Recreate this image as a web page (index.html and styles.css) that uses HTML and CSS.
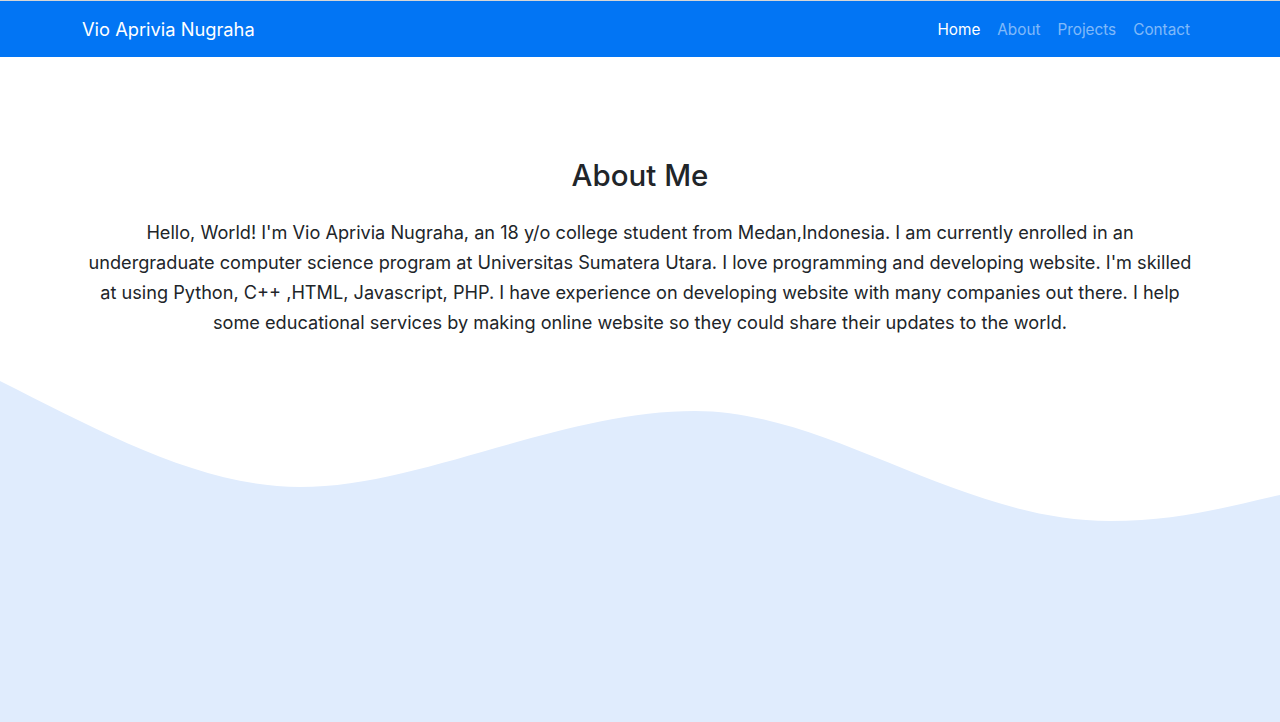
FILE: index.html
```html
<!DOCTYPE html>
<html lang="en">
<head>
<meta charset="utf-8">
<title>Vio Aprivia Nugraha</title>
<link rel="stylesheet" href="styles.css">
</head>
<body>
  <nav class="navbar">
    <div class="nav-inner">
      <a class="brand" href="#">Vio Aprivia Nugraha</a>
      <ul class="nav-links">
        <li><a class="nav-link active" href="#">Home</a></li>
        <li><a class="nav-link" href="#">About</a></li>
        <li><a class="nav-link" href="#">Projects</a></li>
        <li><a class="nav-link" href="#">Contact</a></li>
      </ul>
    </div>
  </nav>
  <main class="about">
    <h2 class="about-title">About Me</h2>
    <p class="about-text">Hello, World! I'm Vio Aprivia Nugraha, an 18 y/o college student from Medan,Indonesia. I am currently enrolled in an<br>undergraduate computer science program at Universitas Sumatera Utara. I love programming and developing website. I'm skilled<br>at using Python, C++ ,HTML, Javascript, PHP. I have experience on developing website with many companies out there. I help<br>some educational services by making online website so they could share their updates to the world.</p>
  </main>
  <svg class="wave" viewBox="0 0 1280 341" preserveAspectRatio="none" aria-hidden="true">
    <path d="M0,0 C100,50 200,106 300,106 C420,106 560,30 695,30 C830,30 960,140 1110,140 C1180,140 1230,125 1280,114 L1280,341 L0,341 Z" fill="#e0ecfd"/>
  </svg>
</body>
</html>
```

FILE: styles.css
```css
* { box-sizing: border-box; }
html, body { margin: 0; padding: 0; }
body {
  height: 100vh;
  display: flex;
  flex-direction: column;
  font-family: Inter, "Noto Sans", sans-serif;
  color: #212529;
  background: #fff;
  border-top: 1px solid #d6d6d6;
  overflow: hidden;
}
.navbar {
  background: #0275f4;
  height: 56px;
  flex: none;
}
.nav-inner {
  height: 100%;
  display: flex;
  align-items: center;
  justify-content: space-between;
  padding: 0 90px 0 82px;
}
.brand {
  color: #fff;
  text-decoration: none;
  font-size: 18.3px;
  line-height: 30px;
}
.nav-links {
  list-style: none;
  margin: 0;
  padding: 0;
  display: flex;
  gap: 17px;
}
.nav-link {
  display: block;
  padding: 8px 0;
  font-size: 15.3px;
  color: rgba(255,255,255,.5);
  text-decoration: none;
}
.nav-link.active { color: #fff; }
.about {
  padding: 99px 40px 0;
  text-align: center;
  flex: none;
}
.about-title {
  margin: 0 0 23px;
  font-size: 29.5px;
  font-weight: 500;
  line-height: 38px;
}
.about-text {
  margin: 0;
  font-size: 18.15px;
  line-height: 30px;
  white-space: nowrap;
}
.wave {
  display: block;
  margin-top: auto;
  width: 100%;
  height: 341px;
  flex: none;
}
```
